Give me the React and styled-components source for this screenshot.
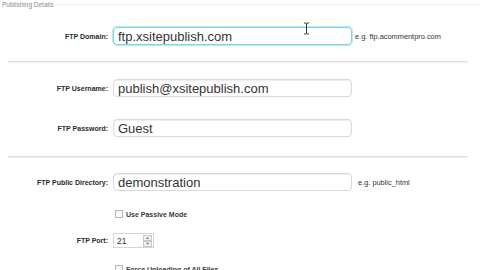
import React from 'react'
import styled, { createGlobalStyle } from 'styled-components'

const Global = createGlobalStyle`
  html, body {
    margin: 0;
    padding: 0;
    background: #fff;
    font-family: "Liberation Sans", Arial, sans-serif;
  }
`

const Page = styled.div`
  position: relative;
  width: 480px;
  height: 270px;
  overflow: hidden;
  background: #fff;
`

const Legend = styled.div`
  display: flex;
  align-items: center;
  gap: 3px;
  height: 9px;
  padding-left: 2px;
  font-size: 6.5px;
  color: #8a8a8a;
  &::after {
    content: '';
    flex: 1;
    height: 1px;
    background: #ececec;
    margin-top: -1px;
  }
`

const Section = styled.div`
  display: flex;
  flex-direction: column;
  padding-top: ${p => p.$top}px;
  padding-bottom: ${p => p.$bottom}px;
`

const Separator = styled.div`
  margin: 0 12px 0 8px;
  height: 2px;
  background: #dedede;
  border-bottom: 1px solid #f2f2f2;
  box-sizing: border-box;
`

const Row = styled.div`
  display: flex;
  align-items: center;
  height: ${p => p.$h || 18}px;
  margin-top: ${p => p.$mt || 0}px;
`

const Label = styled.label`
  width: 108px;
  flex-shrink: 0;
  text-align: right;
  font-size: 7px;
  font-weight: bold;
  color: #2a2a2a;
  padding-right: 5px;
  box-sizing: content-box;
`

const TextInput = styled.div`
  width: 239px;
  height: 18px;
  box-sizing: border-box;
  border: 1px solid ${p => (p.$focus ? '#7cd3e3' : '#d8d8d8')};
  box-shadow: ${p => (p.$focus ? '0 0 1px 1px #b5e8f1' : 'inset 0 1px 1px #eee')};
  border-radius: 4px;
  padding-left: 4px;
  display: flex;
  align-items: center;
  font-size: 13px;
  color: #333;
  white-space: nowrap;
  overflow: hidden;
`

const Hint = styled.span`
  margin-left: ${p => p.$ml || 3}px;
  font-size: 7.4px;
  color: #333;
`

const CheckRow = styled.label`
  display: flex;
  align-items: center;
  gap: 3px;
  height: 10px;
  margin-left: 115px;
  margin-top: ${p => p.$mt}px;
  font-size: 7px;
  font-weight: bold;
  color: #3a3a3a;
`

const Box = styled.span`
  width: 8px;
  height: 8px;
  box-sizing: border-box;
  border: 1px solid #b8b8b8;
  background: linear-gradient(#f2f2f2, #fff);
`

const Spinner = styled.div`
  width: 41px;
  height: 15px;
  box-sizing: border-box;
  border: 1px solid #d4d4d4;
  display: flex;
  align-items: center;
  justify-content: space-between;
  padding-left: 3px;
  font-size: 8.5px;
  color: #333;
`

const Arrows = styled.div`
  width: 9px;
  height: 12px;
  display: flex;
  flex-direction: column;
  margin-right: 1px;
`

const Arrow = styled.div`
  flex: 1;
  border: 1px solid #c9c9c9;
  background: #eef2f6;
  display: flex;
  align-items: center;
  justify-content: center;
  font-size: 4px;
  color: #667;
  line-height: 1;
`

const Cursor = styled.svg`
  position: absolute;
  left: 303px;
  top: 22px;
`

export default function App() {
  return (
    <Page>
      <Global />
      <Legend>Publishing Details</Legend>
      <Section $top={18} $bottom={16}>
        <Row>
          <Label>FTP Domain:</Label>
          <TextInput $focus>ftp.xsitepublish.com</TextInput>
          <Hint>e.g. ftp.acommentpro.com</Hint>
        </Row>
      </Section>
      <Separator />
      <Section $top={16} $bottom={19}>
        <Row>
          <Label>FTP Username:</Label>
          <TextInput>publish@xsitepublish.com</TextInput>
        </Row>
        <Row $mt={22}>
          <Label>FTP Password:</Label>
          <TextInput>Guest</TextInput>
        </Row>
      </Section>
      <Separator />
      <Section $top={15} $bottom={0}>
        <Row>
          <Label>FTP Public Directory:</Label>
          <TextInput>demonstration</TextInput>
          <Hint $ml={6}>e.g. public_html</Hint>
        </Row>
        <CheckRow $mt={18}>
          <Box />
          Use Passive Mode
        </CheckRow>
        <Row $h={15} $mt={14}>
          <Label>FTP Port:</Label>
          <Spinner>
            21
            <Arrows>
              <Arrow>▲</Arrow>
              <Arrow>▼</Arrow>
            </Arrows>
          </Spinner>
        </Row>
        <CheckRow $mt={16}>
          <Box />
          Force Uploading of All Files
        </CheckRow>
      </Section>
      <Cursor width="7" height="13" viewBox="0 0 7 13">
        <path d="M1 1h2l0.5 0.6L4 1h2M3.5 1.6v9.8M1 12h2l0.5-0.6L4 12h2" fill="none" stroke="#333" strokeWidth="1" />
      </Cursor>
    </Page>
  )
}
